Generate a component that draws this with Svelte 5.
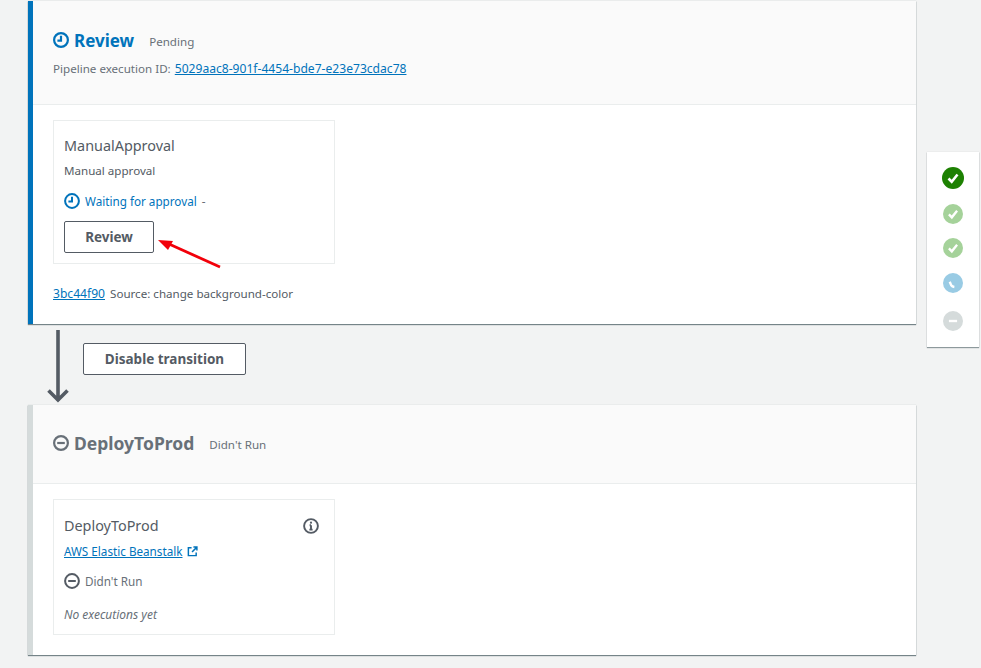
<script>
	const dots = [
		{ kind: 'check', cls: 'dark' },
		{ kind: 'check', cls: 'green' },
		{ kind: 'check', cls: 'green' },
		{ kind: 'clock', cls: 'blue' },
		{ kind: 'minus', cls: 'grey' }
	];
</script>

<div class="page">
	<main class="stages">
		<section class="stage active">
			<header class="stage-head">
				<div class="title-row">
					<svg class="head-icon" viewBox="0 0 16 16"><circle cx="8" cy="8" r="6.9" /><path d="M8 3.8V8.6H4.4" /></svg>
					<h2 class="blue-text">Review</h2>
					<span class="status">Pending</span>
				</div>
				<p class="exec">Pipeline execution ID: <a href="#a">5029aac8-901f-4454-bde7-e23e73cdac78</a></p>
			</header>
			<div class="stage-body">
				<div class="action">
					<h3>ManualApproval</h3>
					<p class="provider">Manual approval</p>
					<div class="state waiting">
						<svg class="state-icon" viewBox="0 0 16 16"><circle cx="8" cy="8" r="6.9" /><path d="M8 3.8V8.6H4.4" /></svg>
						<span>Waiting for approval</span><span class="dash">-</span>
					</div>
					<button class="btn review">Review</button>
				</div>
				<p class="commit"><a href="#c">3bc44f90</a> Source: change background-color</p>
				<svg class="red-arrow" viewBox="0 0 70 34"><path d="M63 31 12 8" /><path class="fill" d="M1 4 16 5 11 14Z" /></svg>
			</div>
		</section>

		<div class="transition">
			<svg class="down" viewBox="0 0 22 73"><path d="M11 0V71M1.5 60.5 11 70l9.5-9.5" /></svg>
			<button class="btn disable">Disable transition</button>
		</div>

		<section class="stage idle">
			<header class="stage-head short">
				<div class="title-row">
					<svg class="head-icon" viewBox="0 0 16 16"><circle cx="8" cy="8" r="6.9" /><path d="M4.2 8H11.8" /></svg>
					<h2>DeployToProd</h2>
					<span class="status">Didn't Run</span>
				</div>
			</header>
			<div class="stage-body">
				<div class="action second">
					<div class="action-top">
						<h3>DeployToProd</h3>
						<svg class="info" viewBox="0 0 16 16"><circle cx="8" cy="8" r="6.9" /><path d="M8 7.2V11.6M6.4 11.6H9.6M6.6 7.2H8" /><circle class="dot" cx="8" cy="4.7" r="1.1" /></svg>
					</div>
					<p class="provider"><a href="#b">AWS Elastic Beanstalk</a>
						<svg class="ext" viewBox="0 0 12 12"><path d="M5 2H1.5V10.5H10V7M7 1.2H10.8V5M10.5 1.5 5.5 6.5" /></svg>
					</p>
					<div class="state muted">
						<svg class="state-icon" viewBox="0 0 16 16"><circle cx="8" cy="8" r="6.9" /><path d="M4.2 8H11.8" /></svg>
						<span>Didn't Run</span>
					</div>
					<p class="empty">No executions yet</p>
				</div>
			</div>
		</section>
	</main>

	<aside class="rail">
		{#each dots as dot}
			<svg class="dot-icon {dot.cls}" viewBox="0 0 22 22">
				<circle class="disc" cx="11" cy="11" r="11" />
				{#if dot.kind === 'check'}
					<path d="M6.5 11.5 9.7 14.7 15.5 7.5" />
				{:else if dot.kind === 'clock'}
					<path d="M7.4 9.6 9 13.5C10 15 11 15.2 12.5 15.4" />
				{:else}
					<path d="M6.5 11H15.5" />
				{/if}
			</svg>
		{/each}
	</aside>
</div>

<style>
	:global(body) {
		margin: 0;
		background: #f2f3f3;
		font-family: "Noto Sans", "Open Sans", sans-serif;
		color: #545b64;
	}

	.page {
		position: relative;
		height: 668px;
		overflow: hidden;
	}

	.stages {
		width: 888px;
		margin-left: 28px;
		padding-top: 1px;
	}

	.stage {
		background: #fff;
		border-left: 5px solid #d5dbdb;
		box-shadow: 0 1px 1px 0 rgba(0, 28, 36, 0.5), 0 0 1px 0 rgba(0, 28, 36, 0.2);
	}

	.stage.active {
		border-left-color: #0073bb;
		height: 323px;
	}

	.stage.idle {
		height: 250px;
	}

	.stage-head {
		height: 104px;
		box-sizing: border-box;
		padding: 28px 20px 0;
		background: #fafafa;
		border-bottom: 1px solid #eaeded;
	}

	.stage-head.short {
		height: 79px;
		padding-top: 27px;
	}

	.title-row {
		display: flex;
		align-items: center;
		height: 22px;
	}

	h2 {
		margin: 0 15px 0 5px;
		font-size: 17.5px;
		font-weight: 700;
		color: #687078;
	}

	h2.blue-text {
		font-size: 17px;
		color: #0073bb;
	}

	.head-icon {
		width: 16px;
		height: 16px;
		fill: none;
		stroke: #687078;
		stroke-width: 2.2;
	}

	.active .head-icon {
		stroke: #0073bb;
	}

	.status {
		font-size: 11.6px;
		color: #687078;
		padding-top: 3px;
	}

	.exec {
		margin: 9px 0 0;
		font-size: 11.6px;
		line-height: 18px;
		color: #687078;
	}

	.exec a {
		margin-left: 1px;
	}

	a {
		font-size: 12.1px;
		color: #0073bb;
		text-decoration: underline;
	}

	.stage-body {
		position: relative;
		padding: 15px 20px;
	}

	.action {
		box-sizing: border-box;
		width: 282px;
		height: 144px;
		padding: 15px 10px;
		border: 1px solid #eaeded;
		background: #fff;
	}

	.action.second {
		height: 136px;
		padding-top: 16px;
	}

	.action-top {
		display: flex;
		justify-content: space-between;
		align-items: center;
	}

	h3 {
		margin: 0;
		font-size: 14.4px;
		line-height: 20px;
		font-weight: 400;
		color: #545b64;
	}

	.provider {
		display: flex;
		align-items: center;
		gap: 5px;
		margin: 5px 0 0;
		height: 18px;
		font-size: 11.6px;
	}

	.provider a {
		font-size: 11.7px;
	}

	.second .provider {
		margin-top: 6px;
	}

	.state {
		display: flex;
		align-items: center;
		gap: 5px;
		margin-top: 13px;
		height: 18px;
		font-size: 11.7px;
	}

	.second .state {
		margin-top: 12px;
	}

	.state-icon {
		width: 16px;
		height: 16px;
		fill: none;
		stroke: #545b64;
		stroke-width: 2;
	}

	.waiting {
		color: #0073bb;
	}

	.waiting .state-icon {
		stroke: #0073bb;
	}

	.muted {
		color: #687078;
	}

	.dash {
		color: #687078;
	}

	.btn {
		box-sizing: border-box;
		height: 32px;
		padding: 0;
		background: #fff;
		border: 1px solid #545b64;
		border-radius: 2px;
		font-family: inherit;
		font-size: 13.5px;
		font-weight: 700;
		color: #545b64;
	}

	.review {
		display: block;
		width: 90px;
		margin-top: 11px;
	}

	.commit {
		margin: 21px 0 0;
		font-size: 11.6px;
		line-height: 18px;
	}

	.commit a {
		margin-right: 2px;
	}

	.empty {
		margin: 16px 0 0;
		font-size: 12px;
		font-style: italic;
		color: #687078;
	}

	.red-arrow {
		position: absolute;
		left: 124px;
		top: 131px;
		width: 70px;
		height: 34px;
		fill: none;
		stroke: #f2000a;
		stroke-width: 2.8;
	}

	.red-arrow .fill {
		fill: #f2000a;
		stroke: none;
	}

	.transition {
		display: flex;
		align-items: flex-start;
		gap: 14px;
		height: 81px;
		padding-left: 19px;
	}

	.down {
		flex: none;
		width: 22px;
		height: 73px;
		margin-top: 6px;
		fill: none;
		stroke: #545b64;
		stroke-width: 3.6;
	}

	.disable {
		width: 163px;
		margin-top: 19px;
	}

	.info {
		width: 16px;
		height: 16px;
		margin-right: 5px;
		fill: none;
		stroke: #545b64;
		stroke-width: 1.9;
	}

	.info .dot {
		fill: #545b64;
		stroke: none;
	}

	.ext {
		width: 11px;
		height: 11px;
		fill: none;
		stroke: #0073bb;
		stroke-width: 1.6;
	}

	.rail {
		position: absolute;
		left: 927px;
		top: 152px;
		box-sizing: border-box;
		width: 52px;
		height: 195px;
		padding-top: 15px;
		background: #fff;
		box-shadow: 0 1px 1px 0 rgba(0, 28, 36, 0.4), 0 0 1px 0 rgba(0, 28, 36, 0.15);
		display: flex;
		flex-direction: column;
		align-items: center;
		gap: 14.5px;
	}

	.dot-icon {
		width: 20px;
		height: 20px;
		fill: none;
		stroke: #fff;
		stroke-width: 2.6;
	}

	.dot-icon.dark {
		width: 22px;
		height: 22px;
	}

	.dot-icon.grey {
		margin-top: 3.5px;
	}

	.disc {
		stroke: none;
	}

	.dark .disc {
		fill: #1d8102;
	}

	.green .disc {
		fill: #a5d29a;
	}

	.blue .disc {
		fill: #99cbe4;
	}

	.grey .disc {
		fill: #d5dbdb;
	}
</style>
